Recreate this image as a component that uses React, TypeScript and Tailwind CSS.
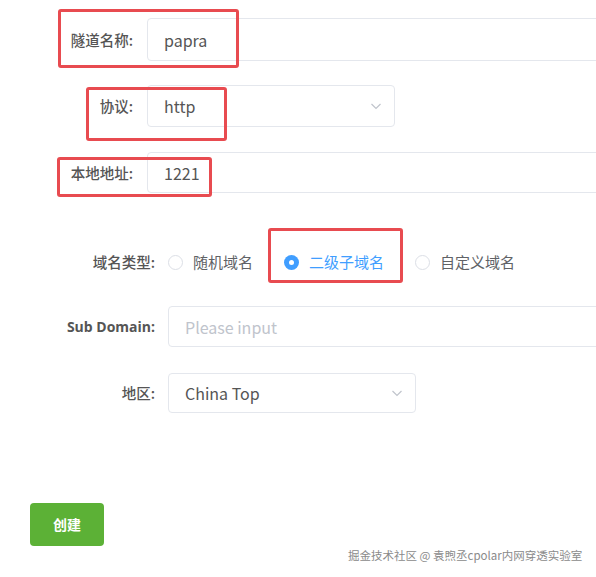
import React from "react";

const font = { fontFamily: '"Noto Sans CJK SC", "Noto Sans", sans-serif' };

function Chevron() {
  return (
    <svg width="14" height="14" viewBox="0 0 14 14" fill="none" className="text-[#c0c4cc]">
      <path d="M2.5 5l4.5 4.5L11.5 5" stroke="currentColor" strokeWidth="1.2" />
    </svg>
  );
}

function Radio({ label, checked }: { label: string; checked?: boolean }) {
  return (
    <div className="flex items-center gap-[10px]">
      {checked ? (
        <span className="w-[15px] h-[15px] rounded-full bg-[#409eff] flex items-center justify-center">
          <span className="w-[5px] h-[5px] rounded-full bg-white" />
        </span>
      ) : (
        <span className="w-[15px] h-[15px] rounded-full border border-[#dcdfe6] bg-white" />
      )}
      <span className={"text-[15px] " + (checked ? "text-[#409eff]" : "text-[#606266]")}>{label}</span>
    </div>
  );
}

export default function App() {
  return (
    <div className="relative w-[596px] h-[577px] overflow-hidden bg-white text-[14px]" style={font}>
      <div className="flex flex-col pt-[18px]">
        {/* first group */}
        <div className="flex items-center h-[43px]">
          <div className="w-[133px] shrink-0 text-right text-[14.5px] font-medium text-[#555]">隧道名称:</div>
          <div className="ml-[14px] shrink-0 w-[470px] h-[43px] border border-[#e4e7ed] rounded-[4px] flex items-center pl-[16px] text-[16px] text-[#555]">
            papra
          </div>
        </div>
        <div className="flex items-center h-[42px] mt-[24px]">
          <div className="w-[133px] shrink-0 text-right text-[14.5px] font-medium text-[#555]">协议:</div>
          <div className="ml-[14px] shrink-0 w-[248px] h-[42px] border border-[#e4e7ed] rounded-[4px] flex items-center justify-between pl-[16px] pr-[11px] text-[16px] text-[#555]">
            <span>http</span>
            <Chevron />
          </div>
        </div>
        <div className="flex items-center h-[41px] mt-[25px]">
          <div className="w-[133px] shrink-0 text-right text-[14.5px] font-medium text-[#555]">本地地址:</div>
          <div className="ml-[14px] shrink-0 w-[470px] h-[41px] border border-[#e4e7ed] rounded-[4px] flex items-center pl-[16px] text-[16px] text-[#555]">
            1221
          </div>
        </div>

        {/* second group */}
        <div className="flex items-center h-[20px] mt-[59px]">
          <div className="w-[155px] shrink-0 text-right text-[14.5px] font-medium text-[#555]">域名类型:</div>
          <div className="ml-[13px] shrink-0 flex items-center gap-[31px]">
            <Radio label="随机域名" />
            <Radio label="二级子域名" checked />
            <Radio label="自定义域名" />
          </div>
        </div>
        <div className="flex items-center h-[41px] mt-[34px]">
          <div
            className="w-[155px] shrink-0 text-right font-bold text-[#555]"
            style={{ fontFamily: '"Open Sans", sans-serif' }}
          >
            Sub Domain:
          </div>
          <div className="ml-[13px] shrink-0 w-[450px] h-[41px] border border-[#e4e7ed] rounded-[4px] flex items-center pl-[16px] text-[16px] text-[#c0c4cc]">
            Please input
          </div>
        </div>
        <div className="flex items-center h-[40px] mt-[26px]">
          <div className="w-[155px] shrink-0 text-right text-[14.5px] font-medium text-[#555]">地区:</div>
          <div className="ml-[13px] shrink-0 w-[248px] h-[40px] border border-[#e4e7ed] rounded-[4px] flex items-center justify-between pl-[16px] pr-[11px] text-[16px] text-[#555]">
            <span>China Top</span>
            <Chevron />
          </div>
        </div>

        <div className="mt-[90px] ml-[30px]">
          <button className="w-[74px] h-[43px] rounded-[4px] bg-[#5cb136] text-white font-bold text-[14px]">
            创建
          </button>
        </div>
      </div>

      {/* annotation boxes */}
      <div className="absolute left-[58px] top-[9px] w-[181px] h-[59px] border-[3px] border-[#e84b50] rounded-[3px]" />
      <div className="absolute left-[86px] top-[87px] w-[141px] h-[54px] border-[3px] border-[#e84b50] rounded-[3px]" />
      <div className="absolute left-[57px] top-[157px] w-[155px] h-[40px] border-[3px] border-[#e84b50] rounded-[3px]" />
      <div className="absolute left-[268px] top-[228px] w-[135px] h-[55px] border-[3px] border-[#e84b50] rounded-[3px]" />

      {/* watermark */}
      <div
        className="absolute left-[348px] top-[547px] text-[11.5px] text-[#8a8a8a]"
        style={{ textShadow: "0 0 1px #fff, 0 0 1px #fff" }}
      >
        掘金技术社区 @ 袁煦丞cpolar内网穿透实验室
      </div>
    </div>
  );
}
